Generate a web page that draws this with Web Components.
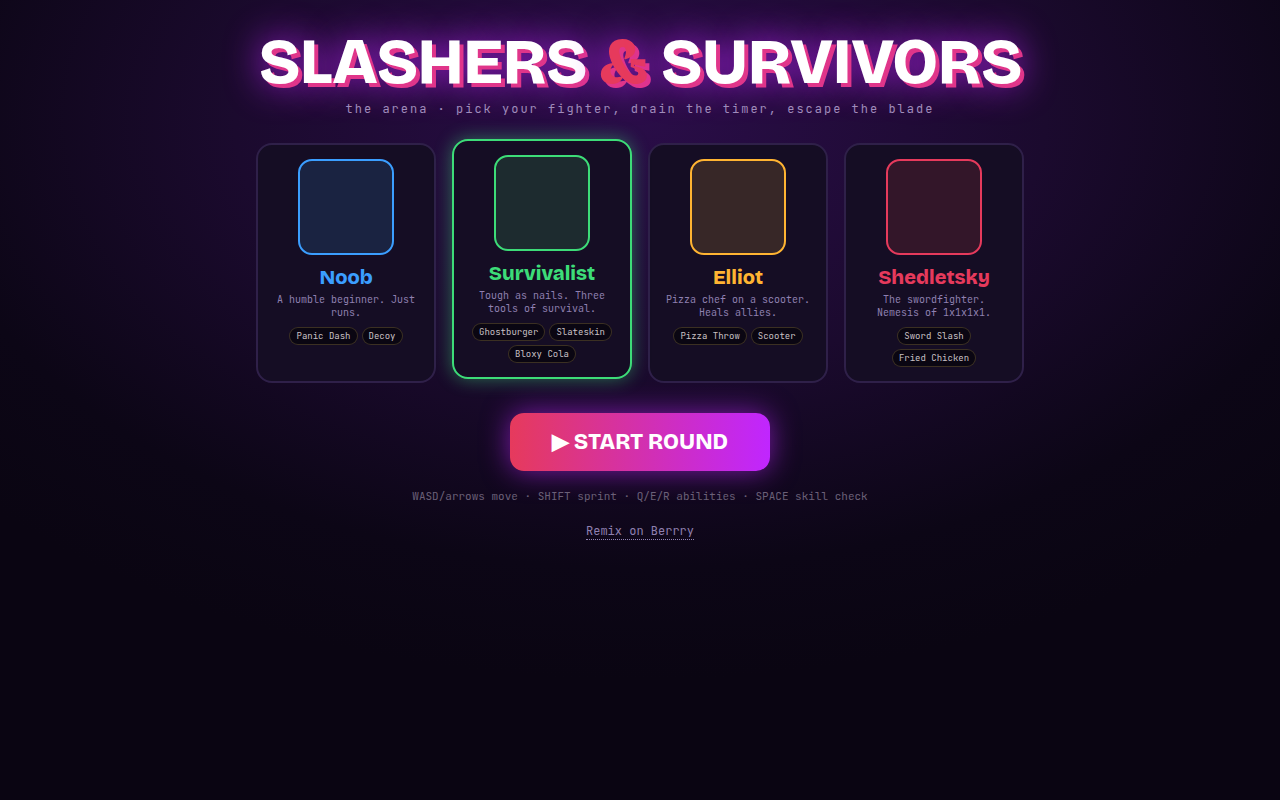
<!DOCTYPE html>
<html lang="en">
<head>
<meta charset="utf-8">
<title>Slashers &amp; Survivors</title>
<style>
html, body {
  margin: 0;
  height: 100%;
  background: #07040e;
}
</style>
</head>
<body>
<game-menu>
  <fighter-card name="Noob" color="#3b9eff" tint="#1a2341" desc="A humble beginner. Just runs.">
    <ability-tag>Panic Dash</ability-tag>
    <ability-tag>Decoy</ability-tag>
  </fighter-card>
  <fighter-card name="Survivalist" color="#3ddc78" tint="#1d2b2f" desc="Tough as nails. Three tools of survival." selected>
    <ability-tag>Ghostburger</ability-tag>
    <ability-tag>Slateskin</ability-tag>
    <ability-tag>Bloxy Cola</ability-tag>
  </fighter-card>
  <fighter-card name="Elliot" color="#ffb432" tint="#372727" desc="Pizza chef on a scooter. Heals allies.">
    <ability-tag>Pizza Throw</ability-tag>
    <ability-tag>Scooter</ability-tag>
  </fighter-card>
  <fighter-card name="Shedletsky" color="#e63a5c" tint="#331629" desc="The swordfighter. Nemesis of 1x1x1x1.">
    <ability-tag>Sword Slash</ability-tag>
    <ability-tag>Fried Chicken</ability-tag>
  </fighter-card>
</game-menu>
<script>
const MONO = `"JetBrains Mono", monospace`;
const SANS = `"Bricolage Grotesque", sans-serif`;

class AbilityTag extends HTMLElement {
  constructor() {
    super();
    this.attachShadow({ mode: "open" });
    this.shadowRoot.innerHTML = `
<style>
:host {
  display: inline-block;
  box-sizing: border-box;
  height: 18px;
  padding: 0 6px;
  border: 1px solid rgba(255, 220, 100, 0.2);
  border-radius: 999px;
  background: #0a0612;
  color: #c8c0c4;
  font: 9px/16px ${MONO};
  white-space: nowrap;
}
</style>
<slot></slot>`;
  }
}
customElements.define("ability-tag", AbilityTag);

class FighterCard extends HTMLElement {
  constructor() {
    super();
    this.attachShadow({ mode: "open" });
    const color = this.getAttribute("color");
    const tint = this.getAttribute("tint");
    this.shadowRoot.innerHTML = `
<style>
:host {
  display: flex;
  flex-direction: column;
  align-items: center;
  box-sizing: border-box;
  width: 180px;
  padding: 14px;
  border: 2px solid #2f2049;
  border-radius: 16px;
  background: #150d24;
  text-align: center;
}
:host([selected]) {
  border-color: ${color};
  box-shadow: 0 0 18px ${color}77;
  transform: translateY(-4px);
}
.portrait {
  box-sizing: border-box;
  width: 96px;
  height: 96px;
  border: 2px solid ${color};
  border-radius: 14px;
  background: ${tint};
}
.name {
  margin-top: 10px;
  color: ${color};
  font: 800 20px/24px ${SANS};
}
.desc {
  margin-top: 4px;
  color: #8f80b0;
  font: 10px/13px ${MONO};
}
.tags {
  display: flex;
  flex-wrap: wrap;
  justify-content: center;
  gap: 4px;
  margin-top: 8px;
}
</style>
<div class="portrait"></div>
<div class="name">${this.getAttribute("name")}</div>
<div class="desc">${this.getAttribute("desc")}</div>
<div class="tags"><slot></slot></div>`;
  }
}
customElements.define("fighter-card", FighterCard);

class GameMenu extends HTMLElement {
  constructor() {
    super();
    this.attachShadow({ mode: "open" });
    this.shadowRoot.innerHTML = `
<style>
:host {
  display: flex;
  flex-direction: column;
  align-items: center;
  box-sizing: border-box;
  min-height: 800px;
  padding-top: 30px;
  background:
    radial-gradient(ellipse 900px 560px at 50% 15%, #2a0d48 0%, #1b0a2e 45%, #0c0616 80%, #0a0512 100%);
  color: #fff;
}
h1 {
  margin: 0;
  color: #fff;
  font: 800 64px/64px ${SANS};
  letter-spacing: -1px;
  text-shadow: 4px 4px 0 #e0358a, 0 0 36px #c026ff;
}
h1 span { color: #e63a5c; }
.sub {
  margin-top: 7px;
  color: #a08cbc;
  font: 12px/16px ${MONO};
  letter-spacing: 2px;
}
.cards {
  display: flex;
  gap: 16px;
  margin-top: 26px;
}
button {
  width: 260px;
  height: 58px;
  margin-top: 30px;
  border: 0;
  border-radius: 14px;
  background: linear-gradient(90deg, #e63a5c, #c026ff);
  box-shadow: 0 0 28px rgba(192, 38, 255, 0.6);
  color: #fff;
  font: 800 22px ${SANS};
}
.hint {
  margin-top: 18px;
  color: #6b6078;
  font: 11px/14px ${MONO};
}
a {
  margin-top: 21px;
  border-bottom: 1px dotted #8f80b0;
  color: #8f80b0;
  font: 12px/15px ${MONO};
  text-decoration: none;
}
</style>
<h1>SLASHERS <span>&amp;</span> SURVIVORS</h1>
<div class="sub">the arena · pick your fighter, drain the timer, escape the blade</div>
<div class="cards"><slot></slot></div>
<button>▶ START ROUND</button>
<div class="hint">WASD/arrows move · SHIFT sprint · Q/E/R abilities · SPACE skill check</div>
<a href="#">Remix on Berrry</a>`;
  }
}
customElements.define("game-menu", GameMenu);
</script>
</body>
</html>
